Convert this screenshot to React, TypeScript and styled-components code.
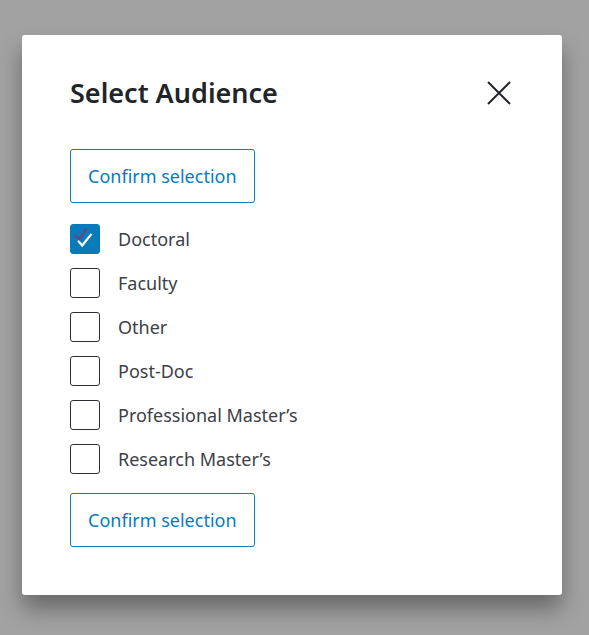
import { useState } from 'react'
import styled, { createGlobalStyle } from 'styled-components'

const audiences = [
  'Doctoral',
  'Faculty',
  'Other',
  'Post-Doc',
  'Professional Master\u2019s',
  'Research Master\u2019s',
]

const App = () => {
  const [selected, setSelected] = useState<string[]>(['Doctoral'])

  const toggle = (name: string) =>
    setSelected((prev) =>
      prev.includes(name) ? prev.filter((n) => n !== name) : [...prev, name]
    )

  return (
    <>
      <GlobalStyle />
      <Overlay>
        <Dialog>
          <Header>
            <Title>Select Audience</Title>
            <CloseButton aria-label="Close">
              <svg width="26" height="26" viewBox="0 0 26 26">
                <path
                  d="M2 2 L24 24 M24 2 L2 24"
                  stroke="#212529"
                  strokeWidth="2"
                  fill="none"
                />
              </svg>
            </CloseButton>
          </Header>
          <ConfirmButton>Confirm selection</ConfirmButton>
          <OptionList>
            {audiences.map((name) => {
              const checked = selected.includes(name)
              return (
                <Option key={name} onClick={() => toggle(name)}>
                  <Box $checked={checked}>
                    {checked && (
                      <svg width="30" height="30" viewBox="0 0 30 30">
                        <path
                          d="M4 10.5 L9 15.5 L16.5 3.5"
                          stroke="#5b4a8c"
                          strokeWidth="2.6"
                          fill="none"
                        />
                        <path
                          d="M7.5 17 L12 22 L22 9.5"
                          stroke="#ffffff"
                          strokeWidth="2.4"
                          fill="none"
                        />
                      </svg>
                    )}
                  </Box>
                  <Label>{name}</Label>
                </Option>
              )
            })}
          </OptionList>
          <ConfirmButton>Confirm selection</ConfirmButton>
        </Dialog>
      </Overlay>
    </>
  )
}

const GlobalStyle = createGlobalStyle`
  html, body {
    margin: 0;
    padding: 0;
    background: #a2a2a2;
    font-family: "Noto Sans", "Open Sans", sans-serif;
  }
`

const Overlay = styled.div`
  width: 589px;
  height: 635px;
  padding: 35px 27px 0 22px;
  box-sizing: border-box;
`

const Dialog = styled.div`
  width: 540px;
  height: 560px;
  box-sizing: border-box;
  background: #ffffff;
  border-radius: 3px;
  padding: 40px 48px 44px;
  box-shadow: 0 14px 22px rgba(0, 0, 0, 0.35);
  display: flex;
  flex-direction: column;
  align-items: flex-start;
`

const Header = styled.div`
  width: 100%;
  display: flex;
  justify-content: space-between;
  align-items: center;
  margin-bottom: 38px;
`

const Title = styled.h2`
  margin: 0;
  font-size: 27px;
  font-weight: 600;
  line-height: 36px;
  color: #212529;
`

const CloseButton = styled.button`
  border: none;
  background: none;
  padding: 0;
  margin-right: 2px;
  display: flex;
  cursor: pointer;
`

const ConfirmButton = styled.button`
  height: 54px;
  padding: 0 17px;
  border: 1px solid #0a7bba;
  border-radius: 3px;
  background: #ffffff;
  color: #0a7bba;
  font-family: inherit;
  font-size: 18px;
  cursor: pointer;
`

const OptionList = styled.div`
  display: flex;
  flex-direction: column;
  gap: 14px;
  margin: 21px 0 19px;
`

const Option = styled.label`
  display: flex;
  align-items: center;
  gap: 18px;
  cursor: pointer;
`

const Box = styled.span<{ $checked: boolean }>`
  width: 30px;
  height: 30px;
  box-sizing: border-box;
  border-radius: 3px;
  border: 1px solid ${(p) => (p.$checked ? '#0a7bba' : '#2b2f33')};
  background: ${(p) => (p.$checked ? '#0a7bba' : '#ffffff')};
  display: flex;
  align-items: center;
  justify-content: center;
  overflow: hidden;
`

const Label = styled.span`
  font-size: 18px;
  color: #3c4047;
`

export default App
